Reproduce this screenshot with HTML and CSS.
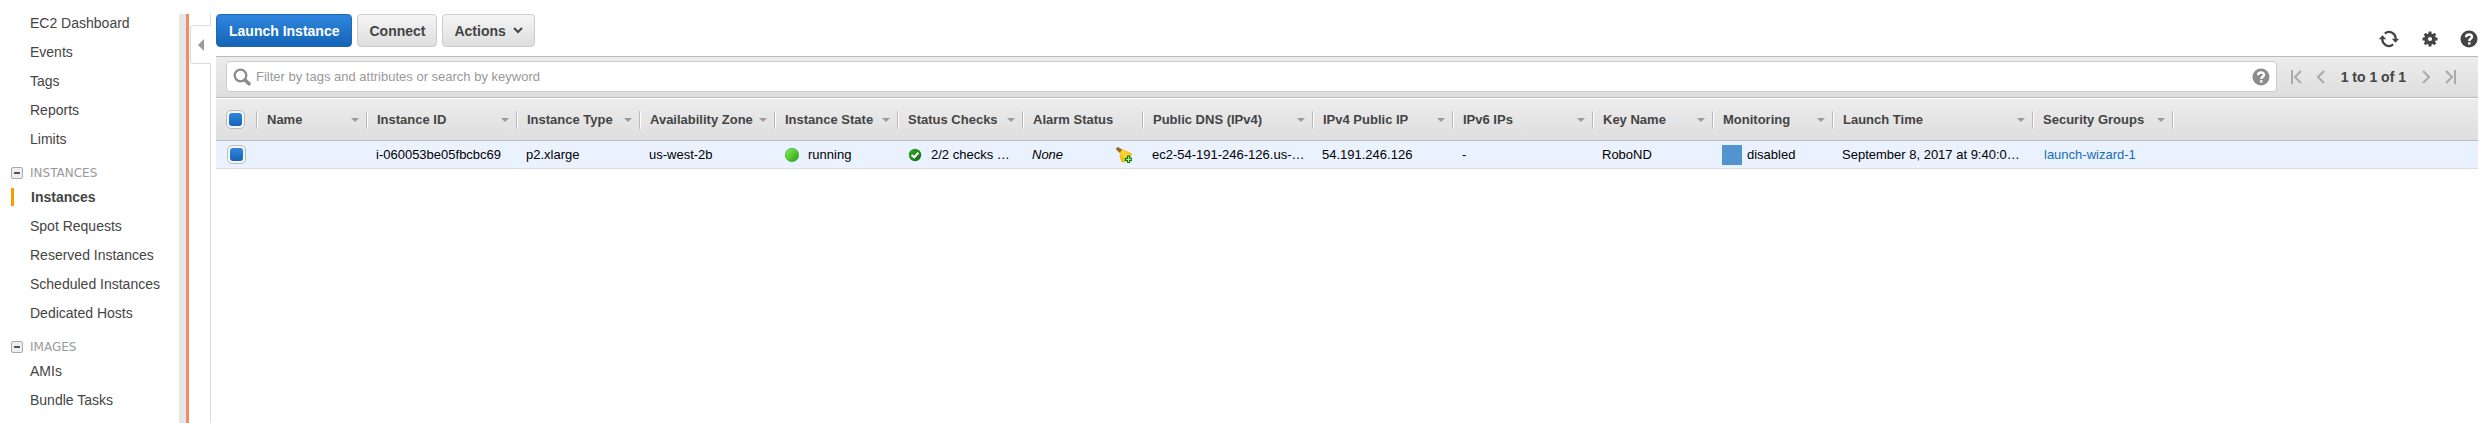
FILE: index.html
```html
<!DOCTYPE html>
<html lang="en">
<head>
<meta charset="utf-8">
<title>EC2 Management Console</title>
<link rel="stylesheet" href="styles.css">
</head>
<body>
<svg class="defs" aria-hidden="true">
  <defs>
    <linearGradient id="g-run" x1="0" y1="0" x2="1" y2="1"><stop offset="0" stop-color="#8ae86a"/><stop offset=".5" stop-color="#55cc30"/><stop offset="1" stop-color="#2f8f18"/></linearGradient>
    <linearGradient id="g-ok" x1="0" y1="0" x2="1" y2="1"><stop offset="0" stop-color="#35b02c"/><stop offset=".5" stop-color="#1f8a1f"/><stop offset="1" stop-color="#0f6414"/></linearGradient>
    <linearGradient id="g-bell" x1="0" y1="1" x2="1" y2="0"><stop offset="0" stop-color="#e8a800"/><stop offset=".5" stop-color="#ffd83a"/><stop offset="1" stop-color="#eab000"/></linearGradient>
    <symbol id="help" viewBox="0 0 18 18"><circle cx="9" cy="9" r="8.5"/><path d="M6.1 7.2C6.1 3.6 12 3.7 12 6.8C12 8.8 9.3 8.8 9.3 11" fill="none" stroke="#fff" stroke-width="2.4"/><rect x="8.1" y="12.2" width="2.4" height="2.4" fill="#fff"/></symbol>
  </defs>
</svg>
<div class="console">
  <nav class="sidebar" aria-label="EC2">
    <ul class="nav-list">
      <li><a href="#">EC2 Dashboard</a></li>
      <li><a href="#">Events</a></li>
      <li><a href="#">Tags</a></li>
      <li><a href="#">Reports</a></li>
      <li><a href="#">Limits</a></li>
    </ul>
    <div class="nav-group"><button class="fold" aria-label="Collapse Instances"></button><h2>INSTANCES</h2></div>
    <ul class="nav-list">
      <li class="current"><a href="#">Instances</a></li>
      <li><a href="#">Spot Requests</a></li>
      <li><a href="#">Reserved Instances</a></li>
      <li><a href="#">Scheduled Instances</a></li>
      <li><a href="#">Dedicated Hosts</a></li>
    </ul>
    <div class="nav-group"><button class="fold" aria-label="Collapse Images"></button><h2>IMAGES</h2></div>
    <ul class="nav-list">
      <li><a href="#">AMIs</a></li>
      <li><a href="#">Bundle Tasks</a></li>
    </ul>
  </nav>
  <div class="splitter">
    <div class="gutter-top"></div>
    <button class="collapse" aria-label="Collapse sidebar"><svg width="6" height="12" viewBox="0 0 6 12"><path d="M6 0V12L0 6Z" fill="#999"/></svg></button>
    <div class="gutter-rest"></div>
  </div>
  <main class="content">
    <div class="toolbar">
      <button class="btn primary">Launch Instance</button>
      <button class="btn">Connect</button>
      <button class="btn menu">Actions <svg width="10" height="7" viewBox="0 0 10 7"><path d="M1 1L5 5L9 1" fill="none" stroke="#444" stroke-width="2"/></svg></button>
      <div class="tools">
        <button class="icon" aria-label="Refresh"><svg width="22" height="18" viewBox="0 0 22 18"><g fill="none" stroke="#444" stroke-width="2.2"><path d="M6.8 3.6A6.6 6.6 0 0 1 17.6 9.400"/><path d="M15.2 14.400A6.6 6.6 0 0 1 4.400 8.600"/></g><path d="M13.800 8.800H21.200L17.500 12.800Z M.8 9.200H8.200L4.500 5.200Z" fill="#444"/></svg></button>
        <button class="icon" aria-label="Settings"><svg width="16" height="16" viewBox="0 0 16 16"><g fill="#444"><circle cx="8" cy="8" r="5.8"/><path id="tooth" d="M6.5 .5H9.5V15.5H6.500Z"/><use href="#tooth" transform="rotate(45 8 8)"/><use href="#tooth" transform="rotate(90 8 8)"/><use href="#tooth" transform="rotate(135 8 8)"/></g><circle cx="8" cy="8" r="2.1" fill="#fff"/></svg></button>
        <button class="icon" aria-label="Help"><svg width="18" height="18" fill="#444"><use href="#help"/></svg></button>
      </div>
    </div>
    <div class="filter-bar">
      <label class="search">
        <svg width="18" height="18" viewBox="0 0 18 18"><circle cx="7.500" cy="7.500" r="5.8" fill="none" stroke="#8c8c8c" stroke-width="2.3"/><path d="M12 12L16 15.7" stroke="#8c8c8c" stroke-width="3.6" stroke-linecap="round"/></svg>
        <input type="text" placeholder="Filter by tags and attributes or search by keyword" aria-label="Filter instances">
        <svg width="18" height="18" fill="#8c8c8c"><use href="#help"/></svg>
      </label>
      <div class="pager">
        <button class="icon" aria-label="First page"><svg width="11" height="14" viewBox="0 0 11 14"><path d="M1 0V14M10 1L4 7L10 13"/></svg></button>
        <button class="icon" aria-label="Previous page"><svg width="8" height="14" viewBox="0 0 8 14"><path d="M7 1L1 7L7 13"/></svg></button>
        <span class="range">1 to 1 of 1</span>
        <button class="icon" aria-label="Next page"><svg width="8" height="14" viewBox="0 0 8 14"><path d="M1 1L7 7L1 13"/></svg></button>
        <button class="icon" aria-label="Last page"><svg width="11" height="14" viewBox="0 0 11 14"><path d="M1 1L7 7L1 13M10 0V14"/></svg></button>
      </div>
    </div>
    <table class="grid">
      <colgroup><col class="w40"><col class="w110"><col class="w150"><col class="w123"><col class="w135"><col class="w123"><col class="w125"><col class="w120"><col class="w170"><col class="w140"><col class="w140"><col class="w120"><col class="w120"><col class="w200"><col class="w140"><col></colgroup>
      <thead>
        <tr>
          <th><input type="checkbox" class="tick" checked aria-label="Select all"></th>
          <th class="sort"><span>Name</span></th>
          <th class="sort"><span>Instance ID</span></th>
          <th class="sort"><span>Instance Type</span></th>
          <th class="sort"><span>Availability Zone</span></th>
          <th class="sort"><span>Instance State</span></th>
          <th class="sort"><span>Status Checks</span></th>
          <th><span>Alarm Status</span></th>
          <th class="sort"><span>Public DNS (IPv4)</span></th>
          <th class="sort"><span>IPv4 Public IP</span></th>
          <th class="sort"><span>IPv6 IPs</span></th>
          <th class="sort"><span>Key Name</span></th>
          <th class="sort"><span>Monitoring</span></th>
          <th class="sort"><span>Launch Time</span></th>
          <th class="sort"><span>Security Groups</span></th>
          <th class="rest"></th>
        </tr>
      </thead>
      <tbody>
        <tr>
          <td><input type="checkbox" class="tick" checked aria-label="Select i-060053be05fbcbc69"></td>
          <td></td>
          <td>i-060053be05fbcbc69</td>
          <td>p2.xlarge</td>
          <td>us-west-2b</td>
          <td><div class="state"><svg width="14" height="14" viewBox="0 0 14 14"><circle cx="7" cy="7" r="6.7" fill="url(#g-run)" stroke="#3da021" stroke-width=".6"/></svg>running</div></td>
          <td><div class="state"><svg width="14" height="14" viewBox="0 0 14 14"><circle cx="7" cy="7" r="6.2" fill="url(#g-ok)"/><path d="M3.600 7L6.2 9.2L10.400 4.800" fill="none" stroke="#fff" stroke-width="2.2"/></svg>2/2 checks …</div></td>
          <td><div class="alarm"><em>None</em><button class="icon" aria-label="Create alarm"><svg width="16" height="16" viewBox="0 0 16 16"><path d="M0 1.200L1.800 0L7 3L4.5 6.500L.6 3Z" fill="#9a6a1c"/><path d="M6.200 2.6C9.500 2.600 12 5.500 16 6.500C15.500 11 11 15 6.200 15.500C4.500 12.500 2.600 9 4.300 5.200Z" fill="url(#g-bell)"/><path d="M11 8.500H14.200V10.800H16V14H14.200V16H11V14H8.800V10.800H11Z" fill="#0a7a0a"/><path d="M12.600 9.600V15M10 12.400H15.200" stroke="#c4f5a8" stroke-width="1"/></svg></button></div></td>
          <td>ec2-54-191-246-126.us-…</td>
          <td>54.191.246.126</td>
          <td>-</td>
          <td>RoboND</td>
          <td><div class="monitor"><span class="swatch"></span>disabled</div></td>
          <td>September 8, 2017 at 9:40:0…</td>
          <td><a href="#">launch-wizard-1</a></td>
          <td></td>
        </tr>
      </tbody>
    </table>
  </main>
</div>
</body>
</html>
```

FILE: styles.css
```css
* { box-sizing: border-box; }
body {
  margin: 0;
  background: #fff;
  color: #444;
  font: 14px/20px "Liberation Sans", Arial, sans-serif;
}
button { font: inherit; color: inherit; cursor: pointer; }
svg { display: block; flex: none; }
.defs { position: absolute; width: 0; height: 0; }

.console { display: flex; height: 100vh; padding: 14px 3px 0 0; overflow: hidden; }

/* sidebar */
.sidebar { flex: none; width: 179px; }
.nav-list { margin: 0; padding: 0; list-style: none; }
.nav-list li { height: 29px; padding-left: 30px; line-height: 18px; }
.nav-list a { color: inherit; text-decoration: none; }
.nav-list .current {
  height: 18px; margin: 0 0 11px 11px; padding-left: 17px;
  border-left: 3px solid #f90; font-weight: bold;
}
.nav-group { display: flex; align-items: center; gap: 7px; height: 29px; padding: 0 0 1px 11px; }
.nav-group h2 { margin: 0; font: 12px/20px "DejaVu Sans", sans-serif; color: #999; }
.fold {
  display: grid; place-items: center;
  width: 12px; height: 12px; padding: 0;
  border: 1px solid #aaa; border-radius: 2px; background: #eee;
}
.fold::before { content: ""; width: 6px; height: 2px; background: #555; }

/* splitter between the sidebar and the list */
.splitter {
  display: flex; flex-direction: column; flex: none;
  width: 32px; padding-left: 1px;
  border-left: 7px solid #e5e5e5;
  box-shadow: inset 3px 0 #f08c64;
}
.gutter-top { height: 11px; margin-left: 10px; border-right: 1px solid #ddd; }
.gutter-rest { flex: 1; margin-left: 10px; border-right: 1px solid #ddd; }
.collapse {
  display: grid; place-items: center;
  height: 39px; margin-left: 3px; padding: 0;
  border: 1px solid #ddd; border-right: 0; border-radius: 4px 0 0 4px;
  background: #fff;
}

/* main list */
.content { flex: 1; min-width: 0; padding-left: 5px; }
.toolbar { display: flex; align-items: flex-start; gap: 5px; height: 42px; }
.btn {
  height: 33px; padding: 0 11px;
  border: 1px solid #ccc; border-radius: 4px;
  background: linear-gradient(#f5f5f5, #dedede);
  font-weight: bold; font-size: 14px;
}
.primary {
  padding: 0 12px;
  border-color: #1f66b3; color: #fff;
  background: linear-gradient(#2f86de, #1464b8);
}
.menu { display: flex; align-items: center; gap: 7px; }
.tools { display: flex; align-items: center; gap: 22px; margin: 16px 0 0 auto; }
.icon { display: block; padding: 0; border: 0; background: none; }

.filter-bar {
  display: flex; align-items: center; gap: 14px;
  height: 42px; padding: 0 22px 1px 10px;
  border-top: 1px solid #bbb; border-bottom: 1px solid #bbb;
  background: linear-gradient(#ececec, #dedede);
}
.search {
  display: flex; align-items: center; gap: 5px; flex: 1;
  height: 31px; padding: 0 6px;
  border: 1px solid #ccc; border-radius: 4px; background: #fff;
}
.search input {
  flex: 1; min-width: 0; padding: 0; border: 0; outline: 0; background: none;
  font: 13px/18px "Liberation Sans", Arial, sans-serif; color: #444;
}
.search input::placeholder { color: #999; opacity: 1; }
.pager { display: flex; align-items: center; gap: 15px; }
.pager path { fill: none; stroke: #aaa; stroke-width: 2; }
.range { padding: 0 1px; font-weight: bold; }

.grid {
  width: 100%; margin-top: 1px;
  border-collapse: separate; border-spacing: 0; table-layout: fixed;
  font-size: 13px; line-height: 16px;
}
.w40 { width: 40px; } .w110 { width: 110px; } .w120 { width: 120px; }
.w123 { width: 123px; } .w125 { width: 125px; } .w135 { width: 135px; }
.w140 { width: 140px; } .w150 { width: 150px; } .w170 { width: 170px; } .w200 { width: 200px; }
.grid thead { background: linear-gradient(#ececec, #dedede); }
.grid th {
  height: 42px; padding: 0; border-bottom: 1px solid #bbb;
  text-align: left; white-space: nowrap;
}
.grid th span {
  display: flex; align-items: center; justify-content: space-between;
  height: 18px; padding: 0 7px 0 11px;
  box-shadow: inset 1px 0 #bbb, inset 2px 0 #fff;
}
.grid .sort span::after {
  content: ""; border: 4px solid transparent; border-top-color: #999; border-bottom: 0;
}
.grid .rest::before { content: ""; display: block; height: 18px; box-shadow: inset 1px 0 #bbb, inset 2px 0 #fff; }
.grid td {
  height: 28px; padding: 0 0 0 10px;
  border-bottom: 1px solid #ddd; background: #eaf2ff; color: #000;
  white-space: nowrap;
}
.grid td:first-child { padding-left: 11px; }
.grid th:first-child { padding-left: 10px; }
.grid a { color: #146eb4; text-decoration: none; padding-left: 2px; }
.tick {
  appearance: none; display: grid; place-items: center;
  width: 19px; height: 19px; margin: 0;
  border: 1px solid #bbb; border-radius: 5px; background: #f5f5f5;
}
.tick:checked::before {
  content: ""; width: 13px; height: 13px; border-radius: 3px;
  background: linear-gradient(#2f86de, #1464b8);
}
.state { display: flex; align-items: center; gap: 9px; padding-left: 1px; }
.alarm { display: flex; align-items: center; justify-content: space-between; padding-right: 10px; }
.monitor { display: flex; align-items: center; gap: 5px; }
.swatch { width: 20px; height: 20px; background: #5294cf; }
```
